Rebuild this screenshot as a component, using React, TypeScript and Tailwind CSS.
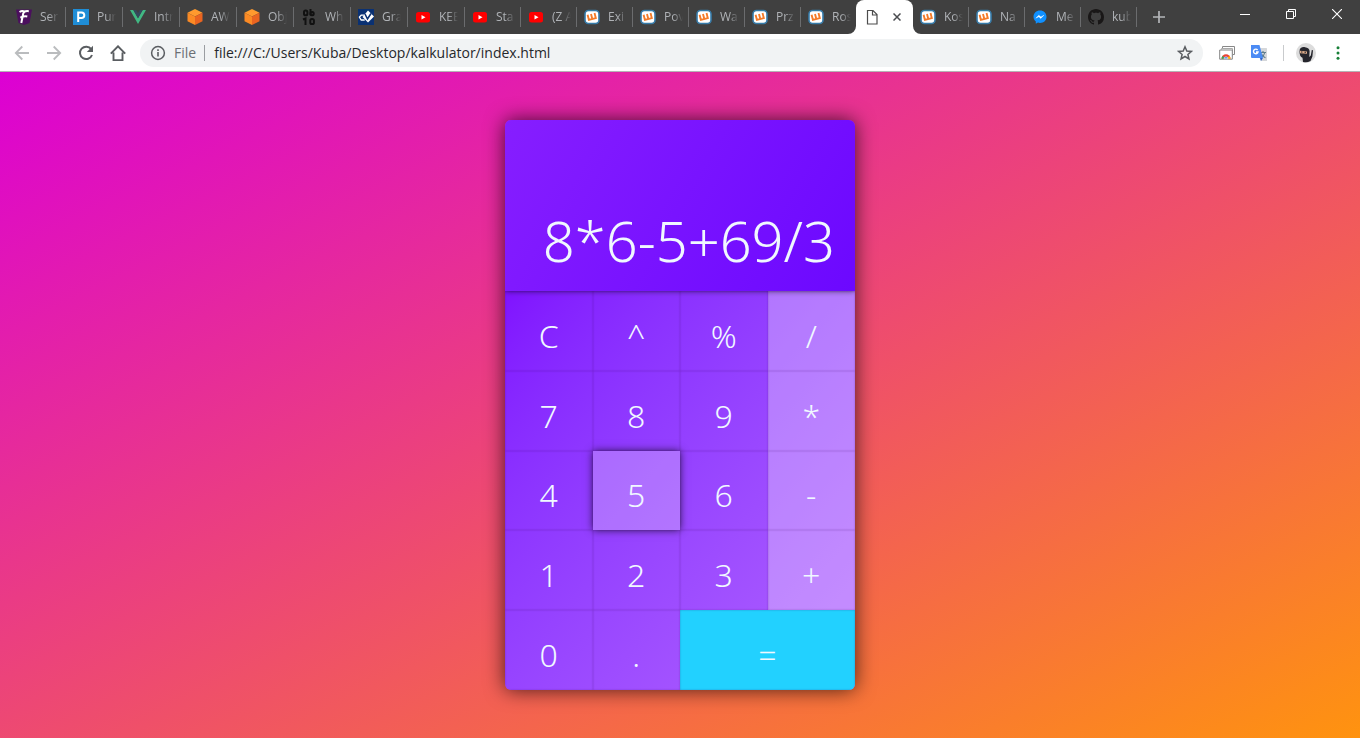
import React from 'react';

type IconName = 'f' | 'p' | 'vue' | 'cube' | 'ob' | 'grav' | 'yt' | 'wyk' | 'file' | 'msg' | 'gh';
type Tab = { title: string; icon: IconName };

const tabs: Tab[] = [
  { title: 'Ser', icon: 'f' },
  { title: 'Pur', icon: 'p' },
  { title: 'Intr', icon: 'vue' },
  { title: 'AW', icon: 'cube' },
  { title: 'Obj', icon: 'cube' },
  { title: 'Wh', icon: 'ob' },
  { title: 'Gra', icon: 'grav' },
  { title: 'KEE', icon: 'yt' },
  { title: 'Sta', icon: 'yt' },
  { title: '(Z A', icon: 'yt' },
  { title: 'Exi', icon: 'wyk' },
  { title: 'Pov', icon: 'wyk' },
  { title: 'Wa', icon: 'wyk' },
  { title: 'Prz', icon: 'wyk' },
  { title: 'Ros', icon: 'wyk' },
  { title: '', icon: 'file' },
  { title: 'Kos', icon: 'wyk' },
  { title: 'Na', icon: 'wyk' },
  { title: 'Me', icon: 'msg' },
  { title: 'kub', icon: 'gh' },
];

function Favicon({ name }: { name: IconName }) {
  const c = 'size-4 shrink-0';
  switch (name) {
    case 'f':
      return (
        <svg viewBox="0 0 16 16" className={c}>
          <path d="M0 .5h16L13.5 14 8 16 2.500 14z" fill="#4b0f5e" />
          <path d="M12.800 2.200Q8 1.600 7.200 4.500L5.300 14M4.300 8.600Q8 6.800 11.300 7.400M3.500 3Q6 1.400 8.500 2.600" fill="none" stroke="#fff" strokeWidth="2" />
        </svg>
      );
    case 'p':
      return (
        <svg viewBox="0 0 16 16" className={c}>
          <path d="M0 0h16v16H0z" fill="#1f8dd6" />
          <path d="M5.200 13V3.500h3.300a2.800 2.800 0 0 1 0 5.600H5.200" fill="none" stroke="#fff" strokeWidth="2" />
        </svg>
      );
    case 'vue':
      return (
        <svg viewBox="0 0 16 16" className={c}>
          <path d="M0 1h3.300L8 9.200 12.700 1H16L8 15z" fill="#41b883" />
          <path d="M3.300 1h2.900L8 4.200 9.800 1h2.900L8 9.200z" fill="#35495e" />
        </svg>
      );
    case 'cube':
      return (
        <svg viewBox="0 0 16 16" className={c}>
          <path d="M8 0l7.500 3.800L8 7.600.5 3.800z" fill="#ff9a2e" />
          <path d="M.5 3.800L8 7.600V16L.5 12.200z" fill="#fb8a24" />
          <path d="M15.500 3.800L8 7.600V16l7.500-3.800z" fill="#ea6420" />
        </svg>
      );
    case 'ob':
      return (
        <svg viewBox="0 0 16 16" className={c}>
          <g fill="none" stroke="#111" strokeWidth="2">
            <rect x="3" y="1.500" width="3.400" height="4.800" rx="1.600" />
            <path d="M9.500 0v6.300" />
            <rect x="9.500" y="3" width="3.200" height="3.300" rx="1.500" />
            <path d="M2 10.500l2.500-1V16" />
            <rect x="9.300" y="10" width="3.600" height="5" rx="1.600" />
          </g>
        </svg>
      );
    case 'grav':
      return (
        <svg viewBox="0 0 16 16" className={c}>
          <path d="M0 0h16v16H0z" fill="#0a3173" />
          <path d="M10 1.500l6 6-6 6-5.500-5.500z" fill="#fff" />
          <path d="M7 5l2.500 5L13 4.500" fill="none" stroke="#0a3173" strokeWidth="1.600" />
          <path d="M6.500 6.200H3.200L1.400 8l1.800 3h3.500" fill="none" stroke="#fff" strokeWidth="1.300" />
        </svg>
      );
    case 'yt':
      return (
        <svg viewBox="0 0 16 16" className={c}>
          <rect x="1" y="3" width="14" height="10.500" rx="2.500" fill="#f00" />
          <path d="M6.500 6v4.500l4-2.250z" fill="#fff" />
        </svg>
      );
    case 'wyk':
      return (
        <svg viewBox="0 0 16 16" className={c}>
          <rect x="1" y="1.500" width="14" height="13" rx="3.500" fill="#fff" stroke="#367ba9" strokeWidth="1.600" />
          <path d="M3.600 5.700l1.300 5.100 6.900-1.700-1.300-5.100M7 4.900l1.300 5.100" fill="none" stroke="#f47b29" strokeWidth="1.900" />
        </svg>
      );
    case 'file':
      return (
        <svg viewBox="0 0 16 16" className={c}>
          <path d="M3.500 1.500h5.500l4 4v9.500H3.500zM8.500 1.500v4.500h4.500" fill="none" stroke="#4c4c4c" strokeWidth="1.200" />
        </svg>
      );
    case 'msg':
      return (
        <svg viewBox="0 0 16 16" className={c}>
          <path d="M8 1.500c-3.800 0-6.500 2.700-6.500 6.200 0 2 .9 3.600 2.300 4.700v2.400l2.200-1.200c.6.200 1.300.3 2 .3 3.800 0 6.500-2.700 6.500-6.200S11.800 1.500 8 1.500z" fill="#1090ff" />
          <path d="M3.800 9.200l3-3L8.900 8l3-1.700-3.200 3.100L6.900 7.700z" fill="#fff" stroke="#fff" strokeWidth=".4" />
        </svg>
      );
    case 'gh':
      return (
        <svg viewBox="0 0 16 16" className={c}>
          <path fill="#191717" fillRule="evenodd" d="M8 0C3.580 0 0 3.580 0 8c0 3.540 2.290 6.530 5.470 7.590.4.070.55-.17.55-.38 0-.19-.010-.82-.010-1.490-2.010.37-2.530-.49-2.690-.94-.09-.23-.48-.94-.82-1.130-.28-.15-.68-.52-.010-.53.63-.010 1.080.58 1.230.82.72 1.210 1.870.87 2.330.66.070-.52.280-.87.510-1.070-1.780-.2-3.640-.89-3.640-3.950 0-.87.310-1.590.82-2.150-.08-.2-.36-1.020.08-2.120 0 0 .67-.21 2.200.82.640-.18 1.320-.27 2-.27s1.360.09 2 .27c1.530-1.040 2.200-.82 2.200-.82.440 1.100.160 1.920.080 2.120.51.560.820 1.270.820 2.150 0 3.070-1.870 3.750-3.650 3.950.290.250.540.730.540 1.480 0 1.070-.010 1.930-.010 2.200 0 .210.150.460.550.380A8.010 8.010 0 0 0 16 8c0-4.420-3.580-8-8-8z" />
        </svg>
      );
  }
}

function TabItem({ tab, index }: { tab: Tab; index: number }) {
  const width = index < 8 ? 'w-[57px]' : 'w-14';
  if (tab.icon === 'file') {
    return (
      <div className="relative -mr-px flex h-full w-[57px] shrink-0 items-center justify-between rounded-t-lg bg-white px-2">
        <svg viewBox="0 0 8 8" className="absolute -left-2 bottom-0 size-2"><path d="M8 0v8H0a8 8 0 0 0 8-8z" fill="#fff" /></svg>
        <svg viewBox="0 0 8 8" className="absolute -right-2 bottom-0 size-2"><path d="M0 0v8h8a8 8 0 0 1-8-8z" fill="#fff" /></svg>
        <Favicon name="file" />
        <button aria-label="Close tab" className="flex size-4 items-center justify-center">
          <svg viewBox="0 0 8 8" className="size-2"><path d="M.5.5l7 7M7.500.5l-7 7" stroke="#4a4c50" strokeWidth="1.500" /></svg>
        </button>
      </div>
    );
  }
  const divider = index === 0 || tabs[index - 1].icon === 'file' ? 'border-transparent' : 'border-[#6b6c6e]';
  return (
    <div className={`${width} ${divider} flex h-5 shrink-0 items-center gap-2 border-l pl-[7px]`}>
      <Favicon name={tab.icon} />
      <span className="w-5 overflow-hidden whitespace-nowrap text-xs text-[#b0b3b7] [mask-image:linear-gradient(to_right,black_45%,transparent_95%)]">{tab.title}</span>
    </div>
  );
}

function TabStrip() {
  return (
    <header className="flex h-[34px] items-center bg-[#404040] pl-2">
      {tabs.map((t, i) => <TabItem key={i} tab={t} index={i} />)}
      <div className="flex h-5 items-center border-l border-[#6b6c6e] pl-[14px]">
        <button aria-label="New tab" className="flex size-4 items-center justify-center">
          <svg viewBox="0 0 12 12" className="size-3"><path d="M6 0v12M0 6h12" stroke="#b4b6b9" strokeWidth="1.700" /></svg>
        </button>
      </div>
      <div className="ml-auto flex h-7 items-center self-start">
        <button aria-label="Minimize" className="flex w-[46px] justify-center"><svg viewBox="0 0 10 10" className="size-[10px]"><path d="M0 5.500h10" stroke="#fff" /></svg></button>
        <button aria-label="Restore" className="flex w-[46px] justify-center"><svg viewBox="0 0 10 10" className="size-[10px]"><path d="M.5 2.500h7v7h-7zM2.500 2.500v-2h7v7h-2" fill="none" stroke="#fff" /></svg></button>
        <button aria-label="Close" className="flex w-[46px] justify-center"><svg viewBox="0 0 10 10" className="size-[10px]"><path d="M0 0l10 10M10 0L0 10" stroke="#fff" strokeWidth="1.100" /></svg></button>
      </div>
    </header>
  );
}

function Toolbar() {
  return (
    <div className="flex h-[38px] items-center border-b border-[#b6b4b6] bg-white px-[14px]">
      <nav className="flex gap-4">
        <button aria-label="Back"><svg viewBox="0 0 16 16" className="size-4"><path d="M15 8H2M8.300 1.500L1.800 8l6.500 6.500" fill="none" stroke="#babcbe" strokeWidth="1.800" /></svg></button>
        <button aria-label="Forward"><svg viewBox="0 0 16 16" className="size-4"><path d="M1 8h13M7.700 1.500L14.200 8l-6.500 6.500" fill="none" stroke="#babcbe" strokeWidth="1.800" /></svg></button>
        <button aria-label="Reload"><svg viewBox="0 0 16 16" className="size-4"><path d="M13.200 4.200A6.200 6.200 0 1 0 14 10" fill="none" stroke="#5a5d61" strokeWidth="2" /><path d="M15 .8V7H8.800z" fill="#5a5d61" /></svg></button>
        <button aria-label="Home"><svg viewBox="0 0 16 16" className="size-4"><path d="M.8 8.700L8 1.300l7.200 7.400M3.500 7.500v7.600h9V7.500" fill="none" stroke="#5a5d61" strokeWidth="1.900" /></svg></button>
      </nav>
      <div className="ml-[14px] flex h-7 flex-1 items-center rounded-full bg-[#f1f3f4] px-[10px] text-sm">
        <svg viewBox="0 0 16 16" className="size-4"><circle cx="8" cy="8" r="6.400" fill="none" stroke="#5a5d61" strokeWidth="1.500" /><path d="M8 7v4.500M8 4.200v1.700" stroke="#5a5d61" strokeWidth="1.600" /></svg>
        <span className="ml-2 text-[#6b6f74]">File</span>
        <span className="ml-2 h-4 w-px bg-[#9a9da1]" />
        <input aria-label="Address" defaultValue="file:///C:/Users/Kuba/Desktop/kalkulator/index.html" className="ml-[9px] min-w-0 flex-1 bg-transparent text-[#26282b] outline-none" />
        <button aria-label="Bookmark"><svg viewBox="0 0 16 16" className="size-4"><path d="M8 1.800l1.800 4.200 4.600.4-3.500 3 1.050 4.500L8 11.500l-3.950 2.400L5.100 9.400l-3.500-3 4.600-.4z" fill="none" stroke="#5a5d61" strokeWidth="1.500" /></svg></button>
      </div>
      <div className="ml-4 flex items-center">
        <button aria-label="Remote desktop">
          <svg viewBox="0 0 16 16" className="size-4"><path d="M3.500 3.500v-2h12v8h-2" fill="none" stroke="#888" /><path d="M2.500 4.500v-1h11v8" fill="none" stroke="#aaa" /><path d="M.7 5h12.600v9.200H.7z" fill="#fff" stroke="#858585" /><path d="M2.500 13.700a4.500 4.500 0 0 1 9 0z" fill="#ea4335" /><path d="M2.500 13.700a4.500 4.500 0 0 1 1-2.800l3.500 2.800z" fill="#34a853" /><path d="M11.500 13.700a4.500 4.500 0 0 0-1-2.800L7 13.700z" fill="#fbbc05" /><path d="M5 13.700a2 2 0 0 1 4 0z" fill="#4285f4" stroke="#fff" strokeWidth=".5" /></svg>
        </button>
        <button aria-label="Translate" className="ml-4">
          <svg viewBox="0 0 16 16" className="size-4"><path d="M6 3h9.500a.5.500 0 0 1 .5.500V16H9.500z" fill="#d5d7da" /><path d="M9.500 7.500h5.500M12 6v1.500M13.800 7.500c-.5 2.500-2 4-3.500 5M10.500 9c1 2 2 3 4 3.800" fill="none" stroke="#607d8b" strokeWidth="1.100" /><path d="M0 0h8.500L12 13H1a1 1 0 0 1-1-1z" fill="#4b8bf4" /><path d="M9 13h3L10 16z" fill="#2f62c9" /><path d="M6.600 5a2.300 2.300 0 1 0 .4 2H5" fill="none" stroke="#fff" strokeWidth="1.400" /></svg>
        </button>
        <span className="ml-4 h-4 w-px bg-[#c9cbcd]" />
        <button aria-label="Profile" className="ml-3">
          <svg viewBox="0 0 20 20" className="size-5"><circle cx="10" cy="10" r="10" fill="#dcdcdc" /><path d="M3.500 8.500C3.500 4.800 6 3.800 9 4.200s4.800 1.800 4.600 4.300L13.300 14l1.500-1.500 1-5.500 1.200.3-.6 6.200-1.900 4.500A10 10 0 0 1 7 19l-.5-4.200C4.500 14 3.500 12 3.500 8.500z" fill="#25252c" /><path d="M3.800 7.800l7.200.6v2.400l-6.800-.6z" fill="#e3b08d" /><path d="M5 9h1.500M8.500 9.300H10" stroke="#25252c" /></svg>
        </button>
        <button aria-label="Menu" className="ml-[14px]">
          <svg viewBox="0 0 16 16" className="size-4"><g fill="#188038"><circle cx="8" cy="2.700" r="1.500" /><circle cx="8" cy="8" r="1.500" /><circle cx="8" cy="13.300" r="1.500" /></g></svg>
        </button>
      </div>
    </div>
  );
}

const keys = ['C', '^', '%', '/', '7', '8', '9', '*', '4', '5', '6', '-', '1', '2', '3', '+', '0', '.', '='];

function keyStyle(k: string) {
  if (k === '=') return 'col-span-2 bg-[#22d1ff] shadow-[inset_0_0_2px_rgba(60,0,90,0.35)]';
  if (k === '5') return 'relative bg-white/25 shadow-[0_0_8px_rgba(0,0,0,0.7)]';
  if ('/*-+'.includes(k)) return 'bg-white/30 shadow-[inset_0_0_2px_rgba(60,0,90,0.35)]';
  return 'shadow-[inset_0_0_2px_rgba(60,0,90,0.35)]';
}

function Calculator() {
  return (
    <section className="w-[350px] overflow-hidden rounded-md font-['Noto_Sans','Open_Sans',sans-serif] font-[350] text-[#f0f8ff] shadow-[0_0_20px_rgba(0,0,0,0.7)]">
      <output className="relative flex h-[171px] items-end justify-end bg-linear-[120deg,#861eff,#6c08ff] px-5 pb-[11px] text-[56px] leading-[80px] shadow-[0_0_6px_rgba(0,0,0,0.6)]">
        8*6-5+69/3
      </output>
      <div className="grid h-[399px] grid-cols-4 grid-rows-5 bg-linear-to-br from-[#8012ff] to-[#b060ff]">
        {keys.map((k) => (
          <button key={k} className={`${keyStyle(k)} flex items-center justify-center pt-[10px] text-[32px] leading-10`}>{k}</button>
        ))}
      </div>
    </section>
  );
}

export default function App() {
  return (
    <div className="flex min-h-screen flex-col font-['Open_Sans','Noto_Sans',sans-serif]">
      <TabStrip />
      <Toolbar />
      <main className="flex flex-1 items-center justify-center bg-linear-to-br/srgb from-[#dc00d4] to-[#ff930f] py-12">
        <Calculator />
      </main>
    </div>
  );
}
